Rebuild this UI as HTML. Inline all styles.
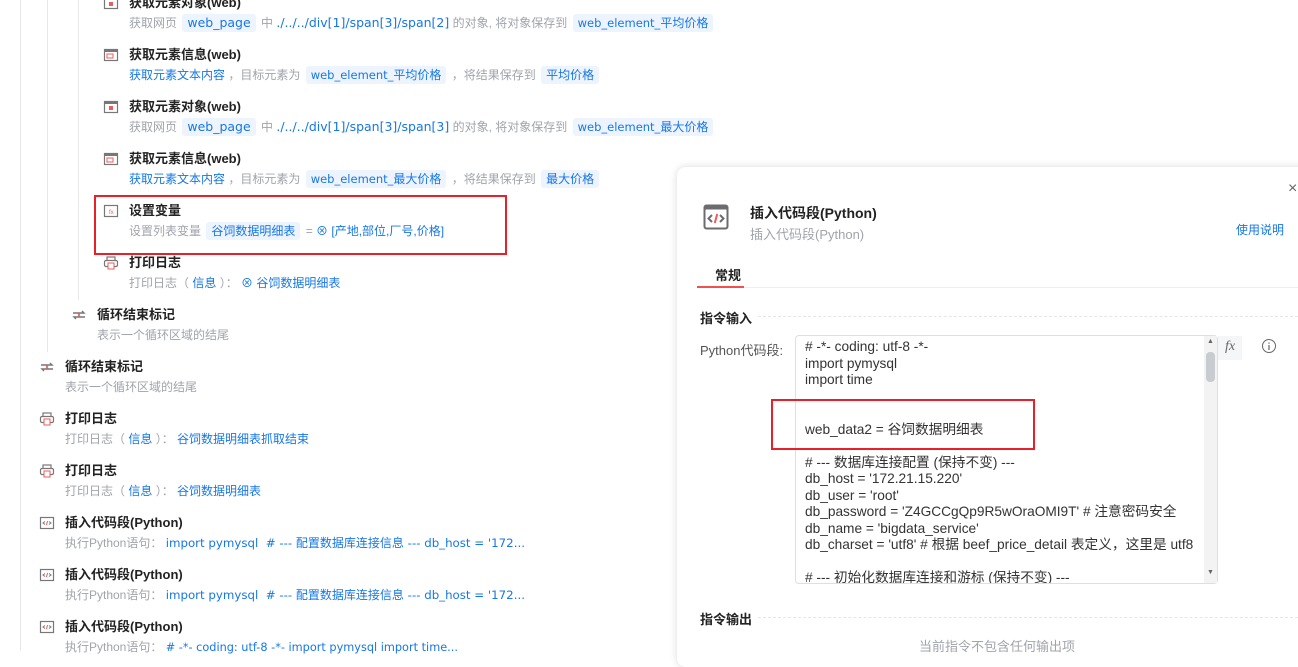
<!DOCTYPE html>
<html><head><meta charset="utf-8">
<style>
*{margin:0;padding:0;box-sizing:border-box}
body{width:1298px;height:651px;overflow:hidden;background:#fff;font-family:"Liberation Sans","Noto Sans CJK SC",sans-serif;position:relative;color:#222}
.vl{position:absolute;width:1px;background:#e8e8ec}
.it{position:absolute;white-space:nowrap}
.it .ic{position:absolute;left:0;top:1px;width:16px;height:16px}
.it .t{position:absolute;top:1px;font-size:13px;font-weight:bold;color:#222;line-height:16px}
.it .s{position:absolute;top:20px;font-size:12px;color:#a0a4ab;line-height:18px}
.l{font-family:"DejaVu Sans","Liberation Sans",sans-serif;font-size:12.5px}
.m{font-family:"DejaVu Sans","Liberation Sans",sans-serif;font-size:11.8px}
.b{color:#1677e6}
.tag{display:inline-block;background:#eef4fd;color:#1677e6;padding:0 5px;border-radius:3px;line-height:18px;margin:0 2px}
.tag .l{font-size:11.5px}
.red{position:absolute;border:2px solid #e8202a}
.panel{position:absolute;left:677px;top:167px;width:640px;height:500px;background:#fff;border-radius:9px;box-shadow:0 0 8px rgba(0,0,0,.15)}
.code{position:absolute;left:795px;top:335px;width:423px;height:249px;border:1px solid #dcdfe6;border-radius:4px;overflow:hidden;font-size:13.7px;line-height:16.5px;color:#333;padding:3px 0 0 9px;white-space:pre}
</style></head><body>
<div class="vl" style="left:20px;top:0;height:651px"></div>
<div class="vl" style="left:47px;top:0;height:352px"></div>
<div class="vl" style="left:78px;top:0;height:300px"></div>

<svg width="0" height="0" style="position:absolute">
<defs>
<g id="web"><rect x="1.5" y="2.5" width="13" height="11" fill="#fff" stroke="#777" stroke-width="1.2"/><rect x="1.5" y="2.5" width="13" height="2.5" fill="#777"/><rect x="6" y="7" width="4" height="4" fill="#f05a5a"/></g>
<g id="info"><rect x="1.5" y="2.5" width="13" height="11" fill="#fff" stroke="#777" stroke-width="1.2"/><rect x="1.5" y="2.5" width="13" height="2.5" fill="#777"/><rect x="4" y="7" width="6" height="4" fill="none" stroke="#f05a5a"/></g>
<g id="var"><rect x="1.5" y="2.5" width="13" height="11" fill="#fff" stroke="#777" stroke-width="1.2"/><text x="6" y="11" font-size="6" fill="#f05a5a">fx</text></g>
<g id="print"><rect x="4" y="2" width="8" height="4" fill="none" stroke="#777" stroke-width="1.2"/><rect x="1.5" y="5.5" width="13" height="6" rx="1.5" fill="#fff" stroke="#777" stroke-width="1.2"/><rect x="5" y="8" width="6" height="6" fill="#fff" stroke="#f05a5a"/></g>
<g id="loop"><path d="M2 6h11l-2-2M14 10H3l2 2" fill="none" stroke="#777" stroke-width="1.4"/><path d="M7 6.5l2 3M9 6.5l-2 3" stroke="#f05a5a"/></g>
<g id="py"><rect x="1.5" y="2.5" width="13" height="11" fill="#fff" stroke="#777" stroke-width="1.2"/><path d="M6 6.5l-2 1.5 2 1.5M10 6.5l2 1.5-2 1.5" fill="none" stroke="#777"/><path d="M8.6 6l-1.2 4" stroke="#f05a5a"/></g>
</defs></svg>

<div class="it" style="left:103px;top:-6px"><svg class="ic" viewBox="0 0 16 16"><use href="#web"/></svg><div class="t" style="left:26px">获取元素对象(web)</div><div class="s" style="left:26px">获取网页 <span class="tag l">web_page</span> 中 <span class="b l">./../../div[1]/span[3]/span[2]</span> 的对象, 将对象保存到 <span class="tag"><span class="l">web_element_</span>平均价格</span></div></div>
<div class="it" style="left:103px;top:46px"><svg class="ic" viewBox="0 0 16 16"><use href="#info"/></svg><div class="t" style="left:26px">获取元素信息(web)</div><div class="s" style="left:26px"><span class="b">获取元素文本内容</span> ，目标元素为 <span class="tag"><span class="l">web_element_</span>平均价格</span> ，将结果保存到 <span class="tag">平均价格</span></div></div>
<div class="it" style="left:103px;top:98px"><svg class="ic" viewBox="0 0 16 16"><use href="#web"/></svg><div class="t" style="left:26px">获取元素对象(web)</div><div class="s" style="left:26px">获取网页 <span class="tag l">web_page</span> 中 <span class="b l">./../../div[1]/span[3]/span[3]</span> 的对象, 将对象保存到 <span class="tag"><span class="l">web_element_</span>最大价格</span></div></div>
<div class="it" style="left:103px;top:150px"><svg class="ic" viewBox="0 0 16 16"><use href="#info"/></svg><div class="t" style="left:26px">获取元素信息(web)</div><div class="s" style="left:26px"><span class="b">获取元素文本内容</span> ，目标元素为 <span class="tag"><span class="l">web_element_</span>最大价格</span> ，将结果保存到 <span class="tag">最大价格</span></div></div>
<div class="it" style="left:103px;top:202px"><svg class="ic" viewBox="0 0 16 16"><use href="#var"/></svg><div class="t" style="left:26px">设置变量</div><div class="s" style="left:26px">设置列表变量 <span class="tag">谷饲数据明细表</span> = <span class="b">⊗ [产地,部位,厂号,价格]</span></div></div>
<div class="it" style="left:103px;top:254px"><svg class="ic" viewBox="0 0 16 16"><use href="#print"/></svg><div class="t" style="left:26px">打印日志</div><div class="s" style="left:26px">打印日志（ <span class="b">信息</span> ）： <span class="b">⊗ 谷饲数据明细表</span></div></div>
<div class="red" style="left:94px;top:195px;width:413px;height:60px"></div>

<div class="it" style="left:71px;top:306px"><svg class="ic" viewBox="0 0 16 16"><use href="#loop"/></svg><div class="t" style="left:26px">循环结束标记</div><div class="s" style="left:26px">表示一个循环区域的结尾</div></div>

<div class="it" style="left:39px;top:358px"><svg class="ic" viewBox="0 0 16 16"><use href="#loop"/></svg><div class="t" style="left:26px">循环结束标记</div><div class="s" style="left:26px">表示一个循环区域的结尾</div></div>
<div class="it" style="left:39px;top:410px"><svg class="ic" viewBox="0 0 16 16"><use href="#print"/></svg><div class="t" style="left:26px">打印日志</div><div class="s" style="left:26px">打印日志（ <span class="b">信息</span> ）： <span class="b">谷饲数据明细表抓取结束</span></div></div>
<div class="it" style="left:39px;top:462px"><svg class="ic" viewBox="0 0 16 16"><use href="#print"/></svg><div class="t" style="left:26px">打印日志</div><div class="s" style="left:26px">打印日志（ <span class="b">信息</span> ）： <span class="b">谷饲数据明细表</span></div></div>
<div class="it" style="left:39px;top:514px"><svg class="ic" viewBox="0 0 16 16"><use href="#py"/></svg><div class="t" style="left:26px">插入代码段(Python)</div><div class="s" style="left:26px">执行Python语句： <span class="b"><span class="m">import pymysql &nbsp;# --- </span>配置数据库连接信息<span class="m"> --- db_host = '172...</span></span></div></div>
<div class="it" style="left:39px;top:566px"><svg class="ic" viewBox="0 0 16 16"><use href="#py"/></svg><div class="t" style="left:26px">插入代码段(Python)</div><div class="s" style="left:26px">执行Python语句： <span class="b"><span class="m">import pymysql &nbsp;# --- </span>配置数据库连接信息<span class="m"> --- db_host = '172...</span></span></div></div>
<div class="it" style="left:39px;top:618px"><svg class="ic" viewBox="0 0 16 16"><use href="#py"/></svg><div class="t" style="left:26px">插入代码段(Python)</div><div class="s" style="left:26px">执行Python语句： <span class="b m" style="font-size:11.3px"># -*- coding: utf-8 -*- import pymysql import time...</span></div></div>

<div class="panel"></div>
<div style="position:absolute;left:1288px;top:180px;font-size:16px;color:#666">×</div>
<svg style="position:absolute;left:703px;top:204px" width="26" height="26" viewBox="0 0 26 26"><rect x="1.5" y="1.5" width="23" height="23" rx="2" fill="#fff" stroke="#6b6b70" stroke-width="2"/><rect x="1.5" y="1.5" width="23" height="4" fill="#6b6b70"/><path d="M9 11l-3.5 3.5L9 18M17 11l3.5 3.5L17 18" fill="none" stroke="#6b6b70" stroke-width="2"/><path d="M14.2 10l-2.4 9" stroke="#f05a5a" stroke-width="2"/></svg>
<div style="position:absolute;left:750px;top:203px;font-size:14px;font-weight:bold;color:#222">插入代码段(Python)</div>
<div style="position:absolute;left:750px;top:224px;font-size:13px;color:#a0a4ab">插入代码段(Python)</div>
<div style="position:absolute;left:1236px;top:221px;font-size:12px;color:#1677e6">使用说明</div>
<div style="position:absolute;left:715px;top:265px;font-size:13px;font-weight:bold;color:#222">常规</div>
<div style="position:absolute;left:697px;top:287px;width:601px;height:1px;background:#eceef2"></div>
<div style="position:absolute;left:697px;top:286px;width:47px;height:2px;background:#f05050"></div>
<div style="position:absolute;left:700px;top:308px;font-size:13px;font-weight:bold;color:#222">指令输入</div>
<div style="position:absolute;left:758px;top:316px;width:540px;border-top:1px dashed #e6e6ea"></div>
<div style="position:absolute;left:700px;top:340px;font-size:13px;color:#555">Python代码段:</div>
<div class="code"># -*- coding: utf-8 -*-
import pymysql
import time


web_data2 = 谷饲数据明细表

# --- 数据库连接配置 (保持不变) ---
db_host = '172.21.15.220'
db_user = 'root'
db_password = 'Z4GCCgQp9R5wOraOMI9T' # 注意密码安全
db_name = 'bigdata_service'
db_charset = 'utf8' # 根据 beef_price_detail 表定义，这里是 utf8

# --- 初始化数据库连接和游标 (保持不变) ---</div>
<div style="position:absolute;left:1204px;top:336px;width:13px;height:247px;background:#f3f3f3"></div>
<div style="position:absolute;left:1206px;top:352px;width:9px;height:30px;background:#c8cbd0;border-radius:4px"></div>
<div style="position:absolute;left:1207px;top:338px;font-size:7px;color:#666">▲</div>
<div style="position:absolute;left:1207px;top:569px;font-size:7px;color:#666">▼</div>
<div style="position:absolute;left:1218px;top:336px;width:24px;height:24px;background:#f5f6f8;font-size:14px;font-style:italic;color:#666;text-align:center;line-height:22px;font-family:'Liberation Serif',serif">fx</div>
<svg style="position:absolute;left:1261px;top:338px" width="16" height="16" viewBox="0 0 16 16"><circle cx="8" cy="8" r="6.5" fill="none" stroke="#666"/><path d="M8 7v5M8 4.5v1.2" stroke="#666" stroke-width="1.2"/></svg>
<div class="red" style="left:771px;top:399px;width:264px;height:51px"></div>
<div style="position:absolute;left:700px;top:609px;font-size:13px;font-weight:bold;color:#222">指令输出</div>
<div style="position:absolute;left:758px;top:617px;width:540px;border-top:1px dashed #e6e6ea"></div>
<div style="position:absolute;left:919px;top:636px;font-size:13px;color:#a0a4ab">当前指令不包含任何输出项</div>
</body></html>
